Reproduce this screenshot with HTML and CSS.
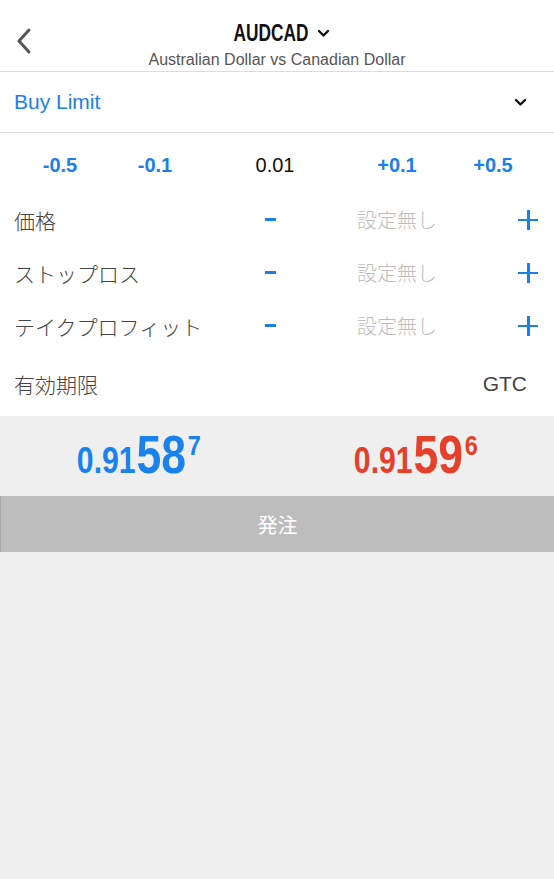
FILE: index.html
```html
<!DOCTYPE html>
<html lang="ja">
<head>
    <meta charset="UTF-8">
    <meta name="viewport" content="width=device-width, initial-scale=1.0">
    <title>AUDCAD 注文</title>
    <link rel="stylesheet" href="styles.css">
</head>
<body>
    <header class="topbar">
        <button class="back" type="button" aria-label="戻る">
            <svg width="18" height="28" viewBox="0 0 18 28"><path d="M14 3 L4 14 L14 25" fill="none" stroke="#555" stroke-width="3" stroke-linecap="round" stroke-linejoin="round"/></svg>
        </button>
        <div class="title">
            <div class="symbol"><span class="narrow">AUDCAD</span>
                <svg width="13" height="9" viewBox="0 0 13 9"><path d="M2 2 L6.5 6.5 L11 2" fill="none" stroke="#111" stroke-width="2.4" stroke-linecap="round" stroke-linejoin="round"/></svg>
            </div>
            <div class="desc">Australian Dollar vs Canadian Dollar</div>
        </div>
    </header>

    <div class="order-type">
        <span>Buy Limit</span>
        <svg width="13" height="9" viewBox="0 0 13 9"><path d="M2 2 L6.5 6.5 L11 2" fill="none" stroke="#111" stroke-width="2.4" stroke-linecap="round" stroke-linejoin="round"/></svg>
    </div>

    <div class="steps">
        <span class="step">-0.5</span>
        <span class="step">-0.1</span>
        <span class="volume">0.01</span>
        <span class="step">+0.1</span>
        <span class="step">+0.5</span>
    </div>

    <div class="field">
        <span class="label">価格</span>
        <span class="minus"></span>
        <span class="value">設定無し</span>
        <span class="plus"></span>
    </div>
    <div class="field">
        <span class="label">ストップロス</span>
        <span class="minus"></span>
        <span class="value">設定無し</span>
        <span class="plus"></span>
    </div>
    <div class="field">
        <span class="label">テイクプロフィット</span>
        <span class="minus"></span>
        <span class="value">設定無し</span>
        <span class="plus"></span>
    </div>
    <div class="field expiry">
        <span class="label">有効期限</span>
        <span class="gtc">GTC</span>
    </div>

    <section class="bottom">
        <div class="quotes">
            <div class="quote bid"><span class="narrow">0.91<b>58</b><sup>7</sup></span></div>
            <div class="quote ask"><span class="narrow">0.91<b>59</b><sup>6</sup></span></div>
        </div>
        <button class="submit" type="button" disabled>発注</button>
    </section>
</body>
</html>
```

FILE: styles.css
```css
html, body {
    height: 100%;
}
body {
    margin: 0;
    font-family: "Liberation Sans", Arial, "Noto Sans CJK JP", sans-serif;
    background: #fff;
    display: flex;
    flex-direction: column;
}
.narrow {
    display: inline-block;
    transform: scaleX(0.72);
}
.topbar {
    height: 71px;
    border-bottom: 1px solid #dcdcdc;
    position: relative;
}
.back {
    position: absolute;
    left: 15px;
    top: 27px;
    padding: 0;
    border: none;
    background: none;
}
.title {
    text-align: center;
    padding-top: 17px;
}
.symbol {
    font-weight: bold;
    font-size: 24px;
    line-height: 32px;
    height: 32px;
    color: #111;
    padding-left: 10px;
}
.symbol .narrow {
    margin: 0 -15px;
}
.symbol svg {
    margin-left: 2px;
    vertical-align: 3px;
}
.desc {
    font-size: 16px;
    color: #555;
    margin-top: 2px;
}
.order-type {
    height: 60px;
    border-bottom: 1px solid #dcdcdc;
    display: flex;
    align-items: center;
    justify-content: space-between;
    padding: 0 27px 0 14px;
    color: #1a80e8;
    font-size: 21px;
}
.steps {
    display: grid;
    grid-template-columns: 120px 70px 170px 74px 118px;
    box-sizing: border-box;
    height: 60px;
    padding-top: 4px;
    align-items: center;
    text-align: center;
    font-size: 20px;
}
.step {
    color: #1a80e8;
    font-weight: bold;
}
.volume {
    color: #111;
}
.field {
    height: 53px;
    display: flex;
    align-items: center;
    padding: 0 14px;
}
.label {
    flex: 1;
    font-size: 21px;
    color: #444;
    font-family: "Noto Sans CJK JP", sans-serif;
    font-weight: 300;
}
.minus {
    width: 11px;
    height: 3px;
    background: #1a80e8;
    margin-right: 81px;
}
.value {
    width: 161px;
    font-size: 20px;
    color: #bdbdbd;
    font-family: "Noto Sans CJK JP", sans-serif;
    font-weight: 300;
}
.plus {
    width: 20px;
    height: 20px;
    position: relative;
    margin-right: 2px;
}
.plus::before, .plus::after {
    content: "";
    position: absolute;
    background: #1a80e8;
}
.plus::before {
    left: 0;
    right: 0;
    top: 9px;
    height: 2.5px;
}
.plus::after {
    top: 0;
    bottom: 0;
    left: 9px;
    width: 2.5px;
}
.expiry {
    height: 64px;
}
.gtc {
    font-size: 21px;
    color: #444;
    margin-right: 13px;
}
.bottom {
    flex: 1;
    background: #efefef;
}
.quotes {
    height: 80px;
    display: grid;
    grid-template-columns: 1fr 1fr;
    align-items: center;
    text-align: center;
}
.quote {
    font-weight: bold;
    font-size: 36px;
    line-height: 56px;
    padding-top: 4px;
}
.quote .narrow {
    transform: scaleX(0.84);
}
.quote b {
    font-size: 53px;
    margin-left: 1px;
}
.quote sup {
    font-size: 28px;
    line-height: 0;
    vertical-align: 18px;
    margin-left: 2px;
}
.bid {
    color: #1a82ec;
}
.ask {
    color: #e4402a;
}
.submit {
    display: block;
    width: 100%;
    height: 56px;
    background: #bdbdbd;
    border: none;
    border-left: 1px solid #a8a8a8;
    color: #fff;
    font-size: 20px;
    font-family: "Noto Sans CJK JP", sans-serif;
}
```
